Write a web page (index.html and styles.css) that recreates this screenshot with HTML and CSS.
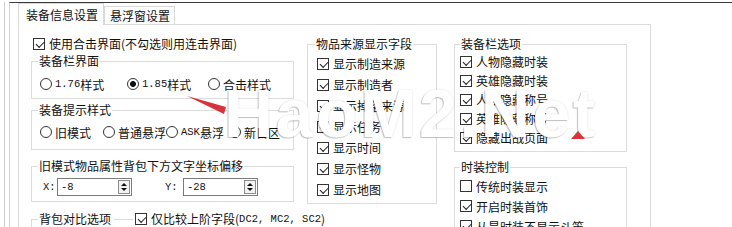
FILE: index.html
```html
<!DOCTYPE html>
<html lang="zh-CN">
<head>
<meta charset="utf-8">
<title>装备信息设置</title>
<link rel="stylesheet" href="styles.css">
</head>
<body>
<div class="shell">
  <div class="window">
    <div class="tabs">
      <div class="tab active">装备信息设置</div>
      <div class="tab second">悬浮窗设置</div>
    </div>
    <div class="panel">
      <div class="col left">
        <label class="check top-check"><span class="box on"></span>使用合击界面(不勾选则用连击界面)</label>
        <fieldset class="grp g1">
          <legend>装备栏界面</legend>
          <div class="radios">
            <label class="radio w87"><span class="dot"></span><span class="mono">1.76</span>样式</label>
            <label class="radio w81"><span class="dot on"></span><span class="mono">1.85</span>样式</label>
            <label class="radio"><span class="dot"></span>合击样式</label>
          </div>
        </fieldset>
        <fieldset class="grp g2">
          <legend>装备提示样式</legend>
          <div class="radios">
            <label class="radio w63"><span class="dot"></span>旧模式</label>
            <label class="radio w63"><span class="dot"></span>普通悬浮</label>
            <label class="radio w63"><span class="dot"></span><span class="mono">ASK</span>悬浮</label>
            <label class="radio"><span class="dot on"></span>新日区</label>
          </div>
        </fieldset>
        <fieldset class="grp g3">
          <legend>旧模式物品属性背包下方文字坐标偏移</legend>
          <div class="spinrow">
            <span class="lbl mono">X:</span>
            <div class="spin"><span class="val mono">-8</span><span class="btn"><i class="up"></i><i class="down"></i></span></div>
            <span class="lbl lbl-y mono">Y:</span>
            <div class="spin"><span class="val mono">-28</span><span class="btn"><i class="up"></i><i class="down"></i></span></div>
          </div>
        </fieldset>
        <fieldset class="grp g4">
          <legend class="legend-row"><span>背包对比选项</span><span class="rule"></span><span class="check inline"><span class="box on"></span>仅比较上阶字段(<span class="mono">DC2, MC2, SC2</span>)</span></legend>
        </fieldset>
      </div>
      <div class="col mid">
        <fieldset class="grp gm">
          <legend>物品来源显示字段</legend>
          <label class="check"><span class="box on"></span>显示制造来源</label>
          <label class="check"><span class="box on"></span>显示制造者</label>
          <label class="check"><span class="box on"></span>显示掉落来源</label>
          <label class="check"><span class="box on"></span>显示任务</label>
          <label class="check"><span class="box on"></span>显示时间</label>
          <label class="check"><span class="box on"></span>显示怪物</label>
          <label class="check"><span class="box on"></span>显示地图</label>
        </fieldset>
      </div>
      <div class="col right">
        <fieldset class="grp gr1">
          <legend>装备栏选项</legend>
          <label class="check"><span class="box on"></span>人物隐藏时装</label>
          <label class="check"><span class="box on"></span>英雄隐藏时装</label>
          <label class="check"><span class="box on"></span>人物隐藏称号</label>
          <label class="check"><span class="box on"></span>英雄隐藏称号</label>
          <label class="check"><span class="box on"></span>隐藏出战页面</label>
        </fieldset>
        <fieldset class="grp gr2">
          <legend>时装控制</legend>
          <label class="check"><span class="box"></span>传统时装显示</label>
          <label class="check"><span class="box on"></span>开启时装首饰</label>
          <label class="check"><span class="box on"></span>从是时装不显示斗笠</label>
        </fieldset>
      </div>
    </div>
  </div>
</div>
<svg class="marks" width="732" height="227" viewBox="0 0 732 227" aria-hidden="true">
  <polygon points="187,96 226,107 224,114" fill="#d6333b"/>
</svg>
<div class="watermark">HaoM2.Net</div>
<svg class="marks" width="732" height="227" viewBox="0 0 732 227" aria-hidden="true">
  <polygon points="571,139 578,131 585,139" fill="#d6333b"/>
</svg>
</body>
</html>
```
FILE: styles.css
```css
* { box-sizing: border-box; }
html, body { margin: 0; padding: 0; }
body {
  position: relative;
  width: 732px;
  height: 227px;
  overflow: hidden;
  background: #fff;
  color: #111;
  font-family: "Noto Sans CJK SC", "Microsoft YaHei", sans-serif;
  font-size: 12px;
}
.mono { font-family: "Liberation Mono", monospace; font-size: 10.5px; }

.shell {
  height: 227px;
  margin-left: 4px;
  border-left: 1px solid #cfcfcf;
  padding-left: 4px;
}
.window {
  margin-top: 2px;
  height: 225px;
  border-top: 1px solid #3a3a3a;
  border-left: 1px solid #d2d2d2;
  padding-left: 8px;
}

/* tabs */
.tabs { display: flex; align-items: flex-end; height: 21px; }
.tab {
  height: 18px;
  line-height: 17px;
  border: 1px solid #d9d9d9;
  border-bottom: none;
  background: #fff;
  white-space: nowrap;
}
.tab.active {
  position: relative;
  z-index: 1;
  width: 86px;
  height: 22px;
  margin-bottom: -1px;
  padding: 2px 0 0 7px;
  line-height: 18px;
}
.tab.second { width: 71px; padding-left: 5px; }

/* panel */
.panel {
  display: flex;
  align-items: flex-start;
  width: 633px;
  height: 210px;
  border: 1px solid #dadada;
  padding-top: 9px;
}
.col { flex: none; }
.left { margin-left: 12px; width: 263px; }
.mid { margin-left: 13px; width: 130px; margin-top: 2px; }
.right { margin-left: 17px; width: 173px; margin-top: 2px; }

/* group boxes */
.grp {
  margin: 0;
  min-width: 0;
  border: 1px solid #dcdcdc;
  padding: 0 4px 4px 6px;
}
.grp legend {
  height: 16px;
  line-height: 16px;
  padding: 0 1px;
  white-space: nowrap;
}
.g1 { padding-top: 5px; padding-bottom: 4px; }
.g2 { margin-top: 3px; padding-top: 4px; padding-bottom: 7px; }
.g3 { margin-top: 8px; padding-top: 3px; padding-bottom: 4px; }
.g4 { margin-top: 9px; height: 30px; }
.gm { padding-left: 7px; padding-top: 1px; padding-bottom: 3px; }
.gm .check { height: 21px; margin-left: 2px; }
.gr1 { padding-left: 5px; padding-top: 0; padding-bottom: 4px; }
.gr1 .check { height: 19px; }
.gr2 { margin-top: 7px; padding-left: 5px; padding-top: 1px; }
.gr2 .check { height: 20px; }

.legend-row { display: flex; align-items: center; }
.legend-row .rule { width: 19px; height: 1px; background: #dcdcdc; margin: 0 2px 0 3px; }

/* check boxes */
.check {
  display: flex;
  align-items: center;
  height: 21px;
  white-space: nowrap;
}
.check.inline { height: 16px; }
.top-check { height: 19px; margin-left: 2px; }
.box {
  flex: none;
  position: relative;
  width: 12px;
  height: 12px;
  margin-right: 4px;
  border: 1px solid #333;
  background: #fff;
}
.box.on::after {
  content: "";
  position: absolute;
  left: 1.5px;
  top: 2px;
  width: 7px;
  height: 3.5px;
  border-left: 1.3px solid #222;
  border-bottom: 1.3px solid #222;
  transform: rotate(-45deg);
}

/* radio buttons */
.radios { display: flex; margin-left: 2px; }
.radio {
  flex: none;
  display: flex;
  align-items: center;
  height: 20px;
  white-space: nowrap;
}
.w87 { width: 87px; }
.w81 { width: 81px; }
.w63 { width: 63px; }
.dot {
  flex: none;
  width: 12px;
  height: 12px;
  margin-right: 3px;
  border: 1px solid #333;
  border-radius: 50%;
  background: #fff;
}
.dot.on { background: radial-gradient(circle, #111 0 2.6px, #fff 3.3px); }

/* spin boxes */
.spinrow { display: flex; align-items: center; height: 20px; margin-left: 5px; }
.lbl { width: 14px; }
.lbl-y { width: 18px; margin-left: 33px; }
.spin {
  display: flex;
  align-items: center;
  width: 75px;
  height: 18px;
  border: 1px solid #7a7a7a;
  padding-left: 3px;
}
.spin .val { flex: 1; }
.spin .btn {
  display: flex;
  flex-direction: column;
  align-items: center;
  justify-content: space-evenly;
  width: 12px;
  height: 14px;
  margin-right: 1px;
  border: 1px solid #8c8c8c;
  background: #f2f2f2;
}
.up, .down { width: 0; height: 0; border-left: 3px solid transparent; border-right: 3px solid transparent; }
.up { border-bottom: 3px solid #111; }
.down { border-top: 3px solid #111; }

/* overlays */
.marks { position: absolute; left: 0; top: 0; pointer-events: none; }
.watermark {
  position: absolute;
  left: 224px;
  top: 79px;
  font-family: "Liberation Sans", Arial, sans-serif;
  font-weight: 700;
  font-size: 68px;
  line-height: 68px;
  letter-spacing: 2.5px;
  color: #fff;
  text-shadow: -1px 1px 1px rgba(0,0,0,0.22), 0 0 2px rgba(0,0,0,0.14);
  white-space: nowrap;
  pointer-events: none;
}
```
